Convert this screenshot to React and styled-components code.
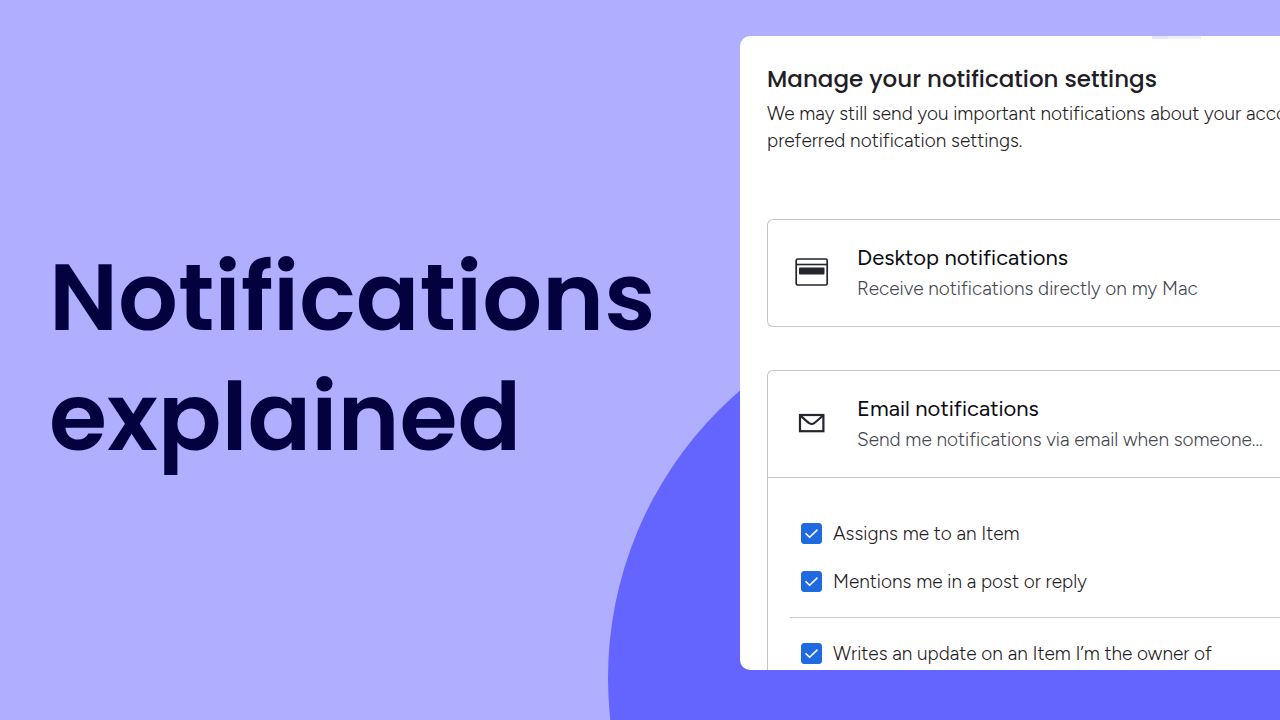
import React from "react";
import styled, { createGlobalStyle } from "styled-components";

const GlobalStyle = createGlobalStyle`
  *, *::before, *::after { box-sizing: border-box; }
  body {
    margin: 0;
    background: #b0afff;
    font-family: Figtree, Inter, "Liberation Sans", sans-serif;
    color: #1f2026;
  }
  h1, h2, h3, p { margin: 0; }
`;

const Page = styled.main`
  position: relative;
  display: grid;
  grid-template-columns: 37fr 27fr;
  min-height: 100vh;
  overflow: hidden;
  background: #b0afff;
`;

const Circle = styled.div`
  position: absolute;
  left: calc(50% - 32px);
  top: calc(50% - 61px);
  width: 758px;
  height: 758px;
  border-radius: 50%;
  background: #6464ff;
`;

const Hero = styled.section`
  display: flex;
  align-items: center;
  padding: 0 0 6px 49px;
`;

const Headline = styled.h1`
  position: relative;
  font-family: Poppins, Inter, "Liberation Sans", sans-serif;
  font-size: 94px;
  line-height: 120px;
  font-weight: 600;
  color: #03023f;
`;

const Panel = styled.section`
  position: relative;
  min-width: 0;
  height: calc(100vh - 86px);
  margin-top: 36px;
  padding: 28px 0 0 27px;
  border-radius: 10px 0 0 10px;
  background: #fff;
  overflow: hidden;
`;

const TabHint = styled.span`
  position: absolute;
  top: 0;
  right: 79px;
  width: 49px;
  height: 3px;
  background: #f0efff;
  border-left: 16px solid #e6e5ff;
`;

const PanelTitle = styled.h2`
  font-family: Poppins, Inter, "Liberation Sans", sans-serif;
  font-size: 23px;
  line-height: 30px;
  font-weight: 500;
`;

const Intro = styled.p`
  margin: 6px 0 65px;
  font-size: 19px;
  line-height: 27px;
  font-weight: 300;
  white-space: nowrap;
`;

const Card = styled.section`
  margin-bottom: 43px;
  border: solid #c3c6d0;
  border-width: 1px 0 1px 1px;
  border-radius: 6px 0 0 6px;
`;

const CardHeader = styled.header`
  display: grid;
  grid-template-columns: 34px 1fr;
  column-gap: 28px;
  align-items: center;
  height: 106px;
  padding: 2px 0 0 27px;

  svg { margin-bottom: 4px; }
`;

const CardTitle = styled.h3`
  font-size: 22px;
  line-height: 30px;
  font-weight: 400;
  color: #0c0c12;
`;

const CardText = styled.p`
  font-size: 19px;
  line-height: 32px;
  font-weight: 300;
  color: #44464f;
  white-space: nowrap;
`;

const Options = styled.div`
  border-top: 1px solid #c3c6d0;
  padding: 32px 0 0 22px;
`;

const OptionGroup = styled.div`
  padding-bottom: 11px;

  & + & {
    border-top: 1px solid #c8c9ce;
    padding-top: 12px;
  }
`;

const Option = styled.label`
  display: flex;
  align-items: center;
  gap: 11px;
  height: 48px;
  padding-left: 11px;
  font-size: 19px;
  line-height: 24px;
  white-space: nowrap;
  font-weight: 300;
`;

const CheckWrap = styled.span`
  display: grid;
  flex: none;
  margin-bottom: 2px;

  & > * { grid-area: 1 / 1; }
  svg { pointer-events: none; }
`;

const CheckInput = styled.input`
  appearance: none;
  width: 21px;
  height: 21px;
  margin: 0;
  border-radius: 3px;
  border: 1px solid #1f6ae0;
  background: #fff;

  &:checked { background: #1f6ae0; }
`;

function WindowIcon() {
  return (
    <svg width="34" height="28" viewBox="0 0 34 28" fill="none" aria-hidden="true">
      <rect x="1.2" y="1" width="31" height="26" rx="1.5" stroke="#24252d" strokeWidth="1.7" />
      <path d="M1 6.5h31" stroke="#24252d" strokeWidth="1.6" />
      <rect x="4" y="9.6" width="25.5" height="7" rx="1" fill="#24252d" />
    </svg>
  );
}

function MailIcon() {
  return (
    <svg width="34" height="28" viewBox="0 0 34 28" fill="none" aria-hidden="true">
      <rect x="5" y="6" width="23.4" height="16.2" stroke="#24252d" strokeWidth="2.2" />
      <path d="M5.5 6.6C9 9.8 12 12.6 14.2 14.2q2.5 1.7 5 0C21.4 12.6 24.5 9.8 28 6.6" stroke="#24252d" strokeWidth="2.1" />
    </svg>
  );
}

function Check({ id }) {
  return (
    <CheckWrap>
      <CheckInput type="checkbox" id={id} defaultChecked />
      <svg width="21" height="21" viewBox="0 0 21 21" fill="none" aria-hidden="true">
        <path d="M5 10.7l3.6 3.6 7.4-7.2" stroke="#fff" strokeWidth="1.6" strokeLinecap="round" strokeLinejoin="round" />
      </svg>
    </CheckWrap>
  );
}

const groups = [
  [
    { id: "assign", label: "Assigns me to an Item" },
    { id: "mention", label: "Mentions me in a post or reply" },
  ],
  [{ id: "update", label: "Writes an update on an Item I’m the owner of" }],
];

export default function App() {
  return (
    <>
      <GlobalStyle />
      <Page>
        <Circle />
        <Hero>
          <Headline>
            Notifications
            <br />
            explained
          </Headline>
        </Hero>
        <Panel>
          <TabHint />
          <PanelTitle>Manage your notification settings</PanelTitle>
          <Intro>
            We may still send you important notifications about your account
            <br />
            preferred notification settings.
          </Intro>
          <Card>
            <CardHeader>
              <WindowIcon />
              <div>
                <CardTitle>Desktop notifications</CardTitle>
                <CardText>Receive notifications directly on my Mac</CardText>
              </div>
            </CardHeader>
          </Card>
          <Card>
            <CardHeader>
              <MailIcon />
              <div>
                <CardTitle>Email notifications</CardTitle>
                <CardText>Send me notifications via email when someone...</CardText>
              </div>
            </CardHeader>
            <Options>
              {groups.map((group) => (
                <OptionGroup key={group[0].id}>
                  {group.map((o) => (
                    <Option key={o.id} htmlFor={o.id}>
                      <Check id={o.id} />
                      {o.label}
                    </Option>
                  ))}
                </OptionGroup>
              ))}
            </Options>
          </Card>
        </Panel>
      </Page>
    </>
  );
}
